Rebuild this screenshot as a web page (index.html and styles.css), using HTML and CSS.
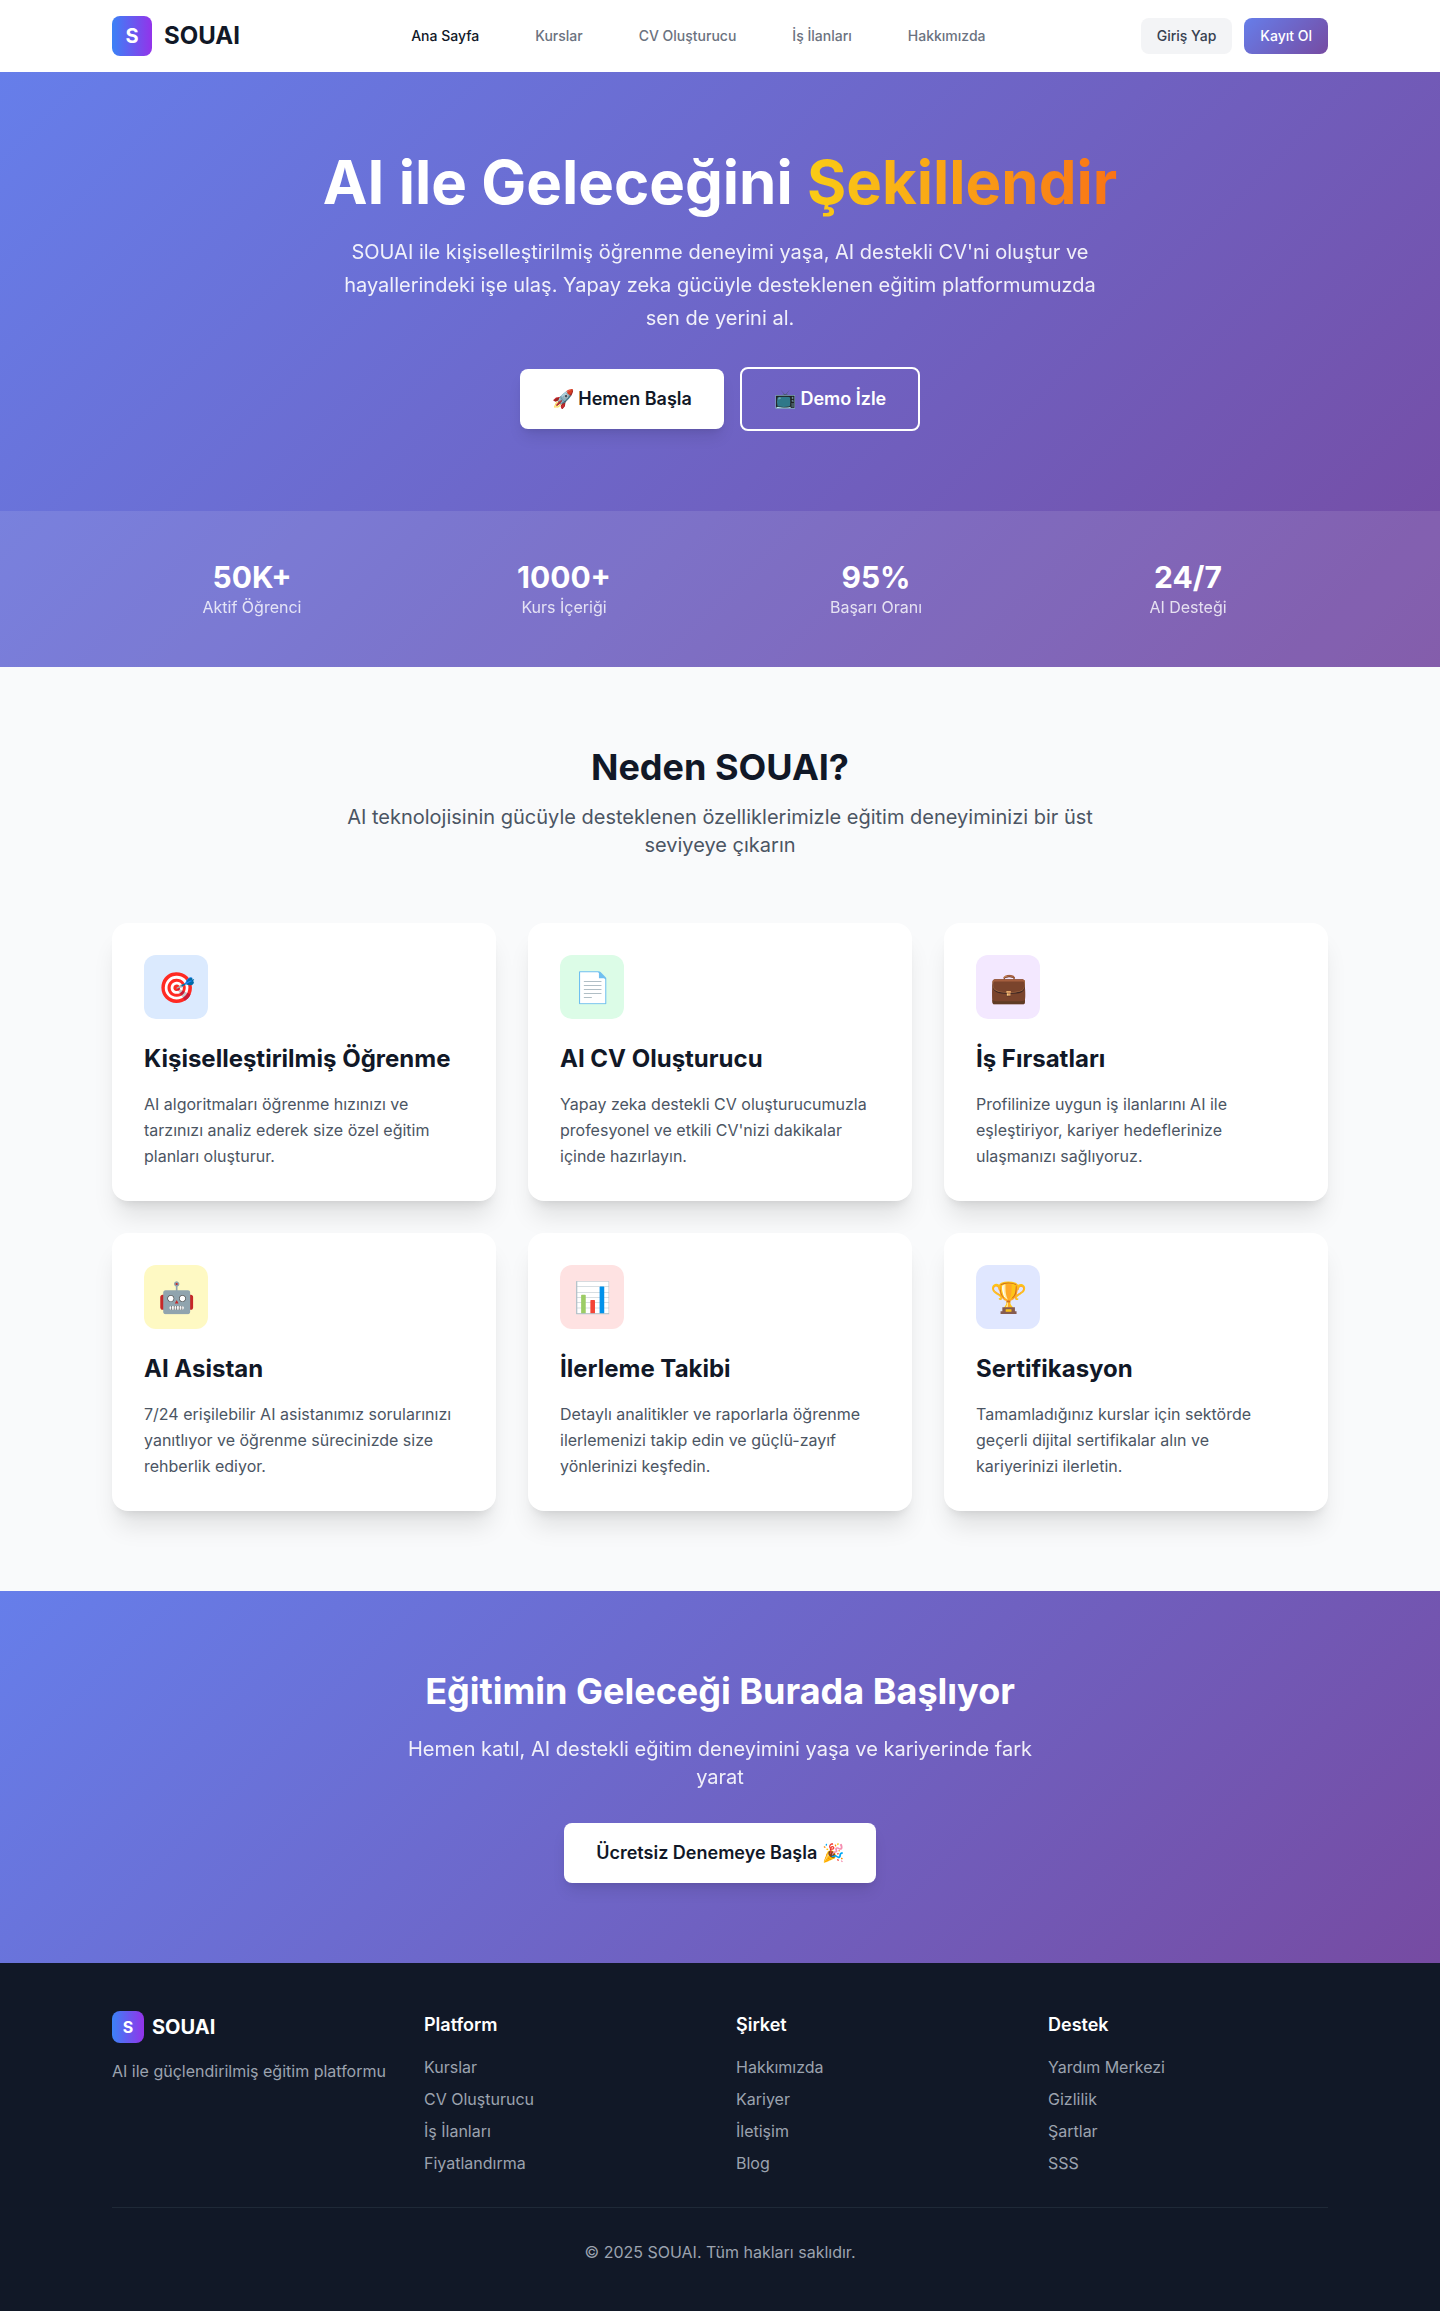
FILE: index.html
```html
<!DOCTYPE html>
<html lang="tr">
<head>
<meta charset="utf-8">
<meta name="viewport" content="width=device-width, initial-scale=1">
<title>SOUAI</title>
<link rel="stylesheet" href="styles.css">
</head>
<body>
<header class="navbar">
  <div class="container navbar-inner">
    <a class="brand" href="#"><span class="logo">S</span><span>SOUAI</span></a>
    <nav class="nav-links">
      <a class="active" href="#">Ana Sayfa</a>
      <a href="#">Kurslar</a>
      <a href="#">CV Oluşturucu</a>
      <a href="#">İş İlanları</a>
      <a href="#">Hakkımızda</a>
    </nav>
    <div class="nav-actions">
      <button class="btn-small btn-login" type="button">Giriş Yap</button>
      <button class="btn-small btn-signup" type="button">Kayıt Ol</button>
    </div>
  </div>
</header>
<main>
  <section class="hero">
    <div class="container hero-content">
      <h1>AI ile Geleceğini <span class="highlight">Şekillendir</span></h1>
      <p>SOUAI ile kişiselleştirilmiş öğrenme deneyimi yaşa, AI destekli CV'ni oluştur ve hayallerindeki işe ulaş. Yapay zeka gücüyle desteklenen eğitim platformumuzda sen de yerini al.</p>
      <div class="hero-buttons">
        <button class="btn btn-primary" type="button">🚀 Hemen Başla</button>
        <button class="btn btn-outline" type="button">📺 Demo İzle</button>
      </div>
    </div>
    <div class="stats">
      <div class="container stats-grid">
        <div><div class="stat-number">50K+</div><div class="stat-label">Aktif Öğrenci</div></div>
        <div><div class="stat-number">1000+</div><div class="stat-label">Kurs İçeriği</div></div>
        <div><div class="stat-number">95%</div><div class="stat-label">Başarı Oranı</div></div>
        <div><div class="stat-number">24/7</div><div class="stat-label">AI Desteği</div></div>
      </div>
    </div>
  </section>
  <section class="features">
    <div class="container">
      <div class="section-head">
        <h2>Neden SOUAI?</h2>
        <p>AI teknolojisinin gücüyle desteklenen özelliklerimizle eğitim deneyiminizi bir üst seviyeye çıkarın</p>
      </div>
      <div class="cards">
        <article class="card"><div class="icon blue">🎯</div><h3>Kişiselleştirilmiş Öğrenme</h3><p>AI algoritmaları öğrenme hızınızı ve tarzınızı analiz ederek size özel eğitim planları oluşturur.</p></article>
        <article class="card"><div class="icon green">📄</div><h3>AI CV Oluşturucu</h3><p>Yapay zeka destekli CV oluşturucumuzla profesyonel ve etkili CV'nizi dakikalar içinde hazırlayın.</p></article>
        <article class="card"><div class="icon purple">💼</div><h3>İş Fırsatları</h3><p>Profilinize uygun iş ilanlarını AI ile eşleştiriyor, kariyer hedeflerinize ulaşmanızı sağlıyoruz.</p></article>
        <article class="card"><div class="icon yellow">🤖</div><h3>AI Asistan</h3><p>7/24 erişilebilir AI asistanımız sorularınızı yanıtlıyor ve öğrenme sürecinizde size rehberlik ediyor.</p></article>
        <article class="card"><div class="icon red">📊</div><h3>İlerleme Takibi</h3><p>Detaylı analitikler ve raporlarla öğrenme ilerlemenizi takip edin ve güçlü-zayıf yönlerinizi keşfedin.</p></article>
        <article class="card"><div class="icon indigo">🏆</div><h3>Sertifikasyon</h3><p>Tamamladığınız kurslar için sektörde geçerli dijital sertifikalar alın ve kariyerinizi ilerletin.</p></article>
      </div>
    </div>
  </section>
  <section class="cta">
    <div class="cta-inner">
      <h2>Eğitimin Geleceği Burada Başlıyor</h2>
      <p>Hemen katıl, AI destekli eğitim deneyimini yaşa ve kariyerinde fark yarat</p>
      <button class="btn btn-primary" type="button">Ücretsiz Denemeye Başla 🎉</button>
    </div>
  </section>
</main>
<footer class="footer">
  <div class="container">
    <div class="footer-grid">
      <div>
        <a class="brand footer-brand" href="#"><span class="logo">S</span><span>SOUAI</span></a>
        <p class="tagline">AI ile güçlendirilmiş eğitim platformu</p>
      </div>
      <div><h4>Platform</h4><ul><li><a href="#">Kurslar</a></li><li><a href="#">CV Oluşturucu</a></li><li><a href="#">İş İlanları</a></li><li><a href="#">Fiyatlandırma</a></li></ul></div>
      <div><h4>Şirket</h4><ul><li><a href="#">Hakkımızda</a></li><li><a href="#">Kariyer</a></li><li><a href="#">İletişim</a></li><li><a href="#">Blog</a></li></ul></div>
      <div><h4>Destek</h4><ul><li><a href="#">Yardım Merkezi</a></li><li><a href="#">Gizlilik</a></li><li><a href="#">Şartlar</a></li><li><a href="#">SSS</a></li></ul></div>
    </div>
    <p class="copyright">© 2025 SOUAI. Tüm hakları saklıdır.</p>
  </div>
</footer>
</body>
</html>
```
FILE: styles.css
```css
* { box-sizing: border-box; margin: 0; padding: 0; }
body { font-family: Inter, "Liberation Sans", sans-serif; font-size: 16px; line-height: 24px; color: #111827; background: #f9fafb; }
a { color: inherit; text-decoration: none; }
button { font-family: inherit; border: 0; cursor: pointer; }
ul { list-style: none; }
.container { width: 100%; max-width: 1280px; margin: 0 auto; padding: 0 32px; }

.navbar { background: #fff; }
.navbar-inner { display: flex; align-items: center; justify-content: space-between; height: 72px; }
.brand { display: flex; align-items: center; gap: 12px; font-size: 24px; line-height: 32px; font-weight: 700; }
.logo { display: flex; align-items: center; justify-content: center; width: 40px; height: 40px; border-radius: 8px; background: linear-gradient(to right, #3b82f6, #9333ea); color: #fff; font-size: 20px; }
.nav-links { display: flex; gap: 56px; margin-left: 16px; font-size: 14px; line-height: 20px; font-weight: 500; color: #6b7280; }
.nav-links .active { color: #111827; }
.nav-actions { display: flex; gap: 12px; }
.btn-small { padding: 8px 16px; border-radius: 8px; font-size: 14px; line-height: 20px; font-weight: 500; }
.btn-login { background: #f3f4f6; color: #374151; }
.btn-signup { background: linear-gradient(135deg, #667eea 0%, #764ba2 100%); color: #fff; }

.hero, .cta { background: linear-gradient(135deg, #667eea 0%, #764ba2 100%); color: #fff; text-align: center; }
.hero-content { padding: 80px 32px; }
.hero h1 { font-size: 60px; line-height: 60px; font-weight: 700; margin-bottom: 24px; }
.highlight { background: linear-gradient(to right, #facc15, #f97316); -webkit-background-clip: text; background-clip: text; color: transparent; }
.hero p { max-width: 768px; font-size: 20px; line-height: 33px; margin: 0 auto 32px; opacity: .9; }
.hero-buttons { display: flex; align-items: center; justify-content: center; gap: 16px; }
.btn { padding: 16px 32px; border-radius: 8px; font-size: 18px; line-height: 28px; font-weight: 600; }
.btn-primary { background: #fff; color: #111827; box-shadow: 0 10px 15px -3px rgba(0,0,0,.1), 0 4px 6px -4px rgba(0,0,0,.1); }
.btn-outline { background: transparent; color: #fff; border: 2px solid #fff; }
.stats { background: rgba(255,255,255,.1); padding: 48px 0; }
.stats-grid { display: grid; grid-template-columns: repeat(4, 1fr); gap: 32px; }
.stat-number { font-size: 30px; line-height: 36px; font-weight: 700; }
.stat-label { line-height: 24px; opacity: .8; }

.features { padding: 80px 0; background: #f9fafb; }
.section-head { max-width: 768px; margin: 0 auto 64px; text-align: center; }
h2 { font-size: 36px; line-height: 40px; font-weight: 700; margin-bottom: 16px; }
.section-head p { font-size: 20px; line-height: 28px; color: #4b5563; }
.cards { display: grid; grid-template-columns: repeat(3, 1fr); gap: 32px; }
.card { background: #fff; border-radius: 16px; padding: 32px; box-shadow: 0 20px 25px -5px rgba(0,0,0,.1), 0 8px 10px -6px rgba(0,0,0,.1); }
.icon { display: flex; align-items: center; justify-content: center; width: 64px; height: 64px; border-radius: 12px; font-size: 30px; line-height: 36px; margin-bottom: 24px; }
.blue { background: #dbeafe; }
.green { background: #dcfce7; }
.purple { background: #f3e8ff; }
.yellow { background: #fef9c3; }
.red { background: #fee2e2; }
.indigo { background: #e0e7ff; }
.card h3 { font-size: 24px; line-height: 32px; font-weight: 700; margin-bottom: 16px; }
.card p { padding-right: 8px; line-height: 26px; color: #4b5563; }

.cta { padding: 80px 32px; }
.cta-inner { max-width: 672px; margin: 0 auto; }
.cta h2 { margin-bottom: 24px; }
.cta p { font-size: 20px; line-height: 28px; margin-bottom: 32px; opacity: .9; }

.footer { background: #111827; color: #9ca3af; padding: 48px 0; }
.footer-grid { display: grid; grid-template-columns: repeat(4, 1fr); gap: 32px; }
.footer-brand { gap: 8px; font-size: 20px; line-height: 28px; color: #fff; margin-bottom: 16px; }
.footer-brand .logo { width: 32px; height: 32px; font-size: 16px; }
.footer h4 { color: #fff; font-size: 18px; line-height: 28px; font-weight: 600; margin-bottom: 16px; }
.footer ul { display: grid; gap: 8px; }
.copyright { border-top: 1px solid #1f2937; margin-top: 32px; padding-top: 32px; text-align: center; }
```
